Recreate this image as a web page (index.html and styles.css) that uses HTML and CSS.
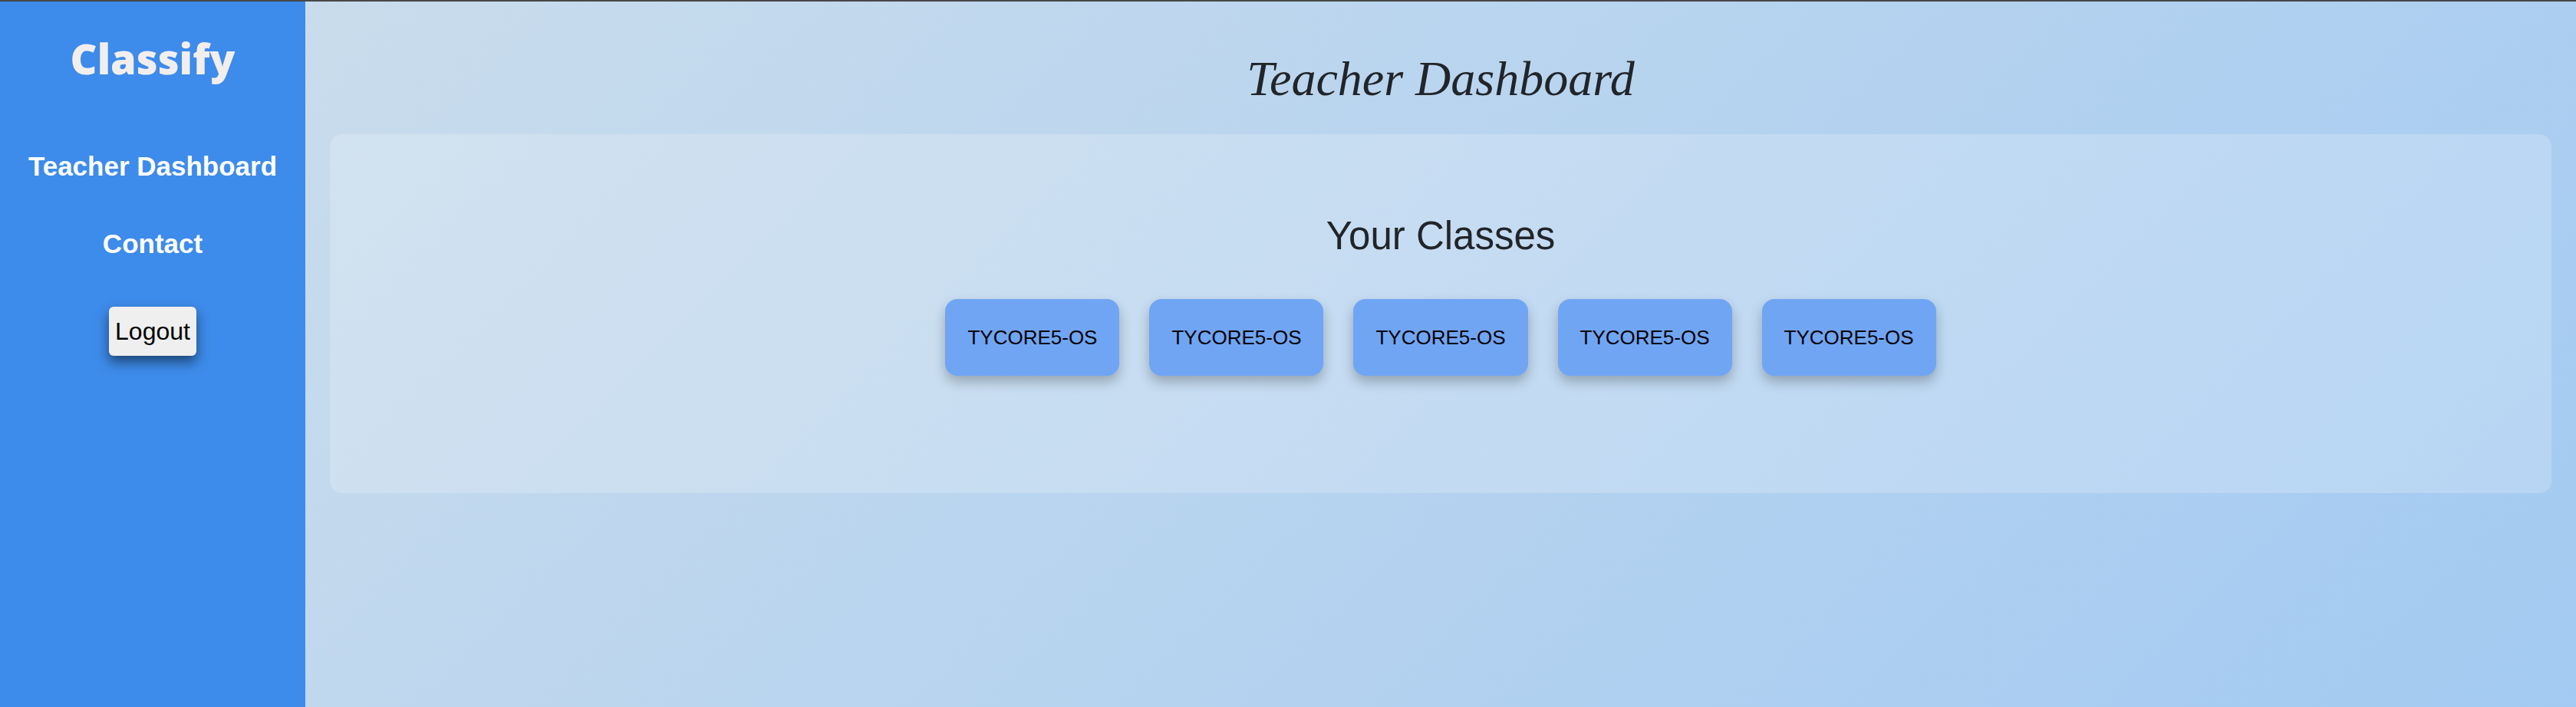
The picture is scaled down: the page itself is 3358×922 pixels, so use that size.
FILE: index.html
```html
<!DOCTYPE html>
<html lang="en">
<head>
<meta charset="utf-8">
<title>Classify</title>
<link rel="stylesheet" href="styles.css">
</head>
<body>
<div class="layout">
  <aside class="sidebar">
    <div class="brand">Classify</div>
    <nav class="nav">
      <a href="#dashboard">Teacher Dashboard</a>
      <a href="#contact">Contact</a>
    </nav>
    <button class="logout" type="button">Logout</button>
  </aside>
  <main class="main">
    <h1 class="title">Teacher Dashboard</h1>
    <section class="panel">
      <h2 class="heading">Your Classes</h2>
      <div class="classes">
        <button class="card" type="button">TYCORE5-OS</button>
        <button class="card" type="button">TYCORE5-OS</button>
        <button class="card" type="button">TYCORE5-OS</button>
        <button class="card" type="button">TYCORE5-OS</button>
        <button class="card" type="button">TYCORE5-OS</button>
      </div>
    </section>
  </main>
</div>
</body>
</html>
```
FILE: styles.css
```css
* {
  box-sizing: border-box;
}

body {
  margin: 0;
  font-family: "Liberation Sans", Arial, sans-serif;
  color: #212529;
}

.layout {
  display: flex;
  min-height: 100vh;
  border-top: 2px solid #484848;
}

.sidebar {
  display: flex;
  flex-direction: column;
  align-items: center;
  flex: none;
  width: 398px;
  padding-top: 38px;
  background: #3d8bea;
}

.brand {
  color: #f2eeee;
  font-family: "Gill Sans", "Open Sans", sans-serif;
  font-size: 54px;
  font-weight: 800;
  line-height: 72px;
}

.nav {
  display: flex;
  flex-direction: column;
  align-items: center;
  gap: 60px;
  margin-top: 84px;
}

.nav a {
  color: #fff;
  font-size: 35px;
  font-weight: 700;
  line-height: 41px;
  text-decoration: none;
}

.logout {
  margin-top: 62px;
  padding: 0 8px;
  border: 0;
  border-radius: 6px;
  background: #efefef;
  box-shadow: 0 8px 16px rgba(0, 0, 0, 0.5);
  color: #000;
  font-family: inherit;
  font-size: 32px;
  line-height: 64px;
}

.main {
  flex: 1;
  min-width: 0;
  padding: 46px 32px 32px;
  background: linear-gradient(135deg, #c9dcec, #a3caf2);
}

.title {
  margin: 0;
  font-family: "Apple Chancery", "Liberation Serif", serif;
  font-size: 64px;
  font-style: italic;
  font-weight: 400;
  line-height: 110px;
  text-align: center;
}

.panel {
  margin-top: 17px;
  padding: 101px 32px 153px;
  border-radius: 16px;
  background: rgba(255, 255, 255, 0.2);
}

.heading {
  margin: 0;
  font-size: 51px;
  font-weight: 400;
  line-height: 64px;
  text-align: center;
}

.classes {
  display: flex;
  flex-wrap: wrap;
  justify-content: center;
  gap: 39px;
  margin-top: 50px;
}

.card {
  padding: 0 29px;
  border: 0;
  border-radius: 16px;
  background: #70a5f4;
  box-shadow: 0 8px 16px rgba(0, 0, 0, 0.25);
  color: #000;
  font-family: inherit;
  font-size: 26px;
  line-height: 100px;
}
```
